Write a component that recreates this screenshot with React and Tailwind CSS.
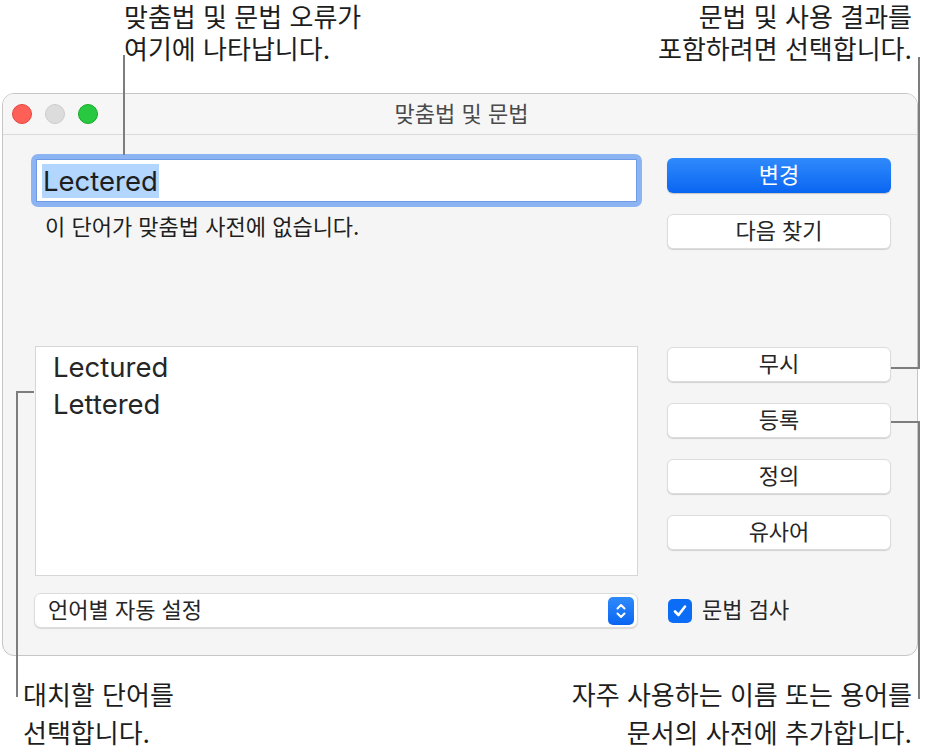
import React from "react";

const font = { fontFamily: '"Inter", "Noto Sans CJK KR", sans-serif' };

function Btn({ children, primary }) {
  if (primary) {
    return (
      <div className="h-[35px] w-[224px] rounded-[6px] bg-gradient-to-b from-[#2f8afb] to-[#0865f2] shadow-[0_1px_1px_rgba(0,0,0,0.2)] flex items-center justify-center text-white text-[22px]">
        {children}
      </div>
    );
  }
  return (
    <div className="h-[35px] w-[224px] rounded-[6px] bg-white border border-[#dcdcdc] shadow-[0_1px_1px_rgba(0,0,0,0.15)] flex items-center justify-center text-[#262626] text-[22px]">
      {children}
    </div>
  );
}

export default function App() {
  return (
    <div className="relative w-[931px] h-[753px] bg-white overflow-hidden text-[#1d1d1d]" style={font}>
      {/* top callouts */}
      <div className="flex justify-between h-[93px] pt-[2px]">
        <div className="ml-[124px] text-[26px] leading-[32px]">
          <div>맞춤법 및 문법 오류가</div>
          <div>여기에 나타납니다.</div>
        </div>
        <div className="mr-[19px] text-[26px] leading-[32px] text-right">
          <div>문법 및 사용 결과를</div>
          <div>포함하려면 선택합니다.</div>
        </div>
      </div>

      {/* window */}
      <div className="ml-[2px] w-[916px] h-[563px] rounded-[12px] border border-[#c6c6c6] bg-[#f5f5f5] overflow-hidden flex flex-col">
        <div className="h-[41px] shrink-0 border-b border-[#dadada] bg-[#f6f6f6] flex items-center">
          <div className="flex gap-[13px] pl-[9px]">
            <div className="w-[20px] h-[20px] rounded-full bg-[#fe5f57] border border-[#e2463f]" />
            <div className="w-[20px] h-[20px] rounded-full bg-[#dcdcdc] border border-[#cccccc]" />
            <div className="w-[20px] h-[20px] rounded-full bg-[#28c840] border border-[#1aab29]" />
          </div>
          <div className="flex-1 text-center text-[22px] text-[#4a4a4a] pr-[92px]">맞춤법 및 문법</div>
        </div>

        <div className="flex flex-1 pl-[28px] pr-[26px]">
          {/* left column */}
          <div className="w-[612px] flex flex-col">
            <div className="mt-[19px] h-[53px] rounded-[7px] bg-[#8db4f2] p-[5px]">
              <div className="h-full bg-white border border-[#6f9ae6] flex items-center pl-[5px]">
                <span className="bg-[#b3d6ff] text-[27.5px] leading-[34px] px-[1px] text-[#1e1e1e]">Lectered</span>
              </div>
            </div>
            <div className="mt-[6px] h-[28px] leading-[28px] pl-[14px] text-[22px] text-[#1f1f1f]">이 단어가 맞춤법 사전에 없습니다.</div>
            <div className="ml-[4px] mt-[105px] w-[603px] h-[230px] bg-white border border-[#d6d6d6] pt-[2px] pl-[17px] text-[27.5px] leading-[37px] text-[#262626]">
              <div>Lectured</div>
              <div>Lettered</div>
            </div>
            <div className="ml-[3px] mt-[17px] w-[604px] h-[35px] rounded-[7px] bg-white border border-[#dcdcdc] shadow-[0_1px_1px_rgba(0,0,0,0.12)] flex items-center justify-between pl-[13px] pr-[3px]">
              <span className="text-[22px] text-[#262626]">언어별 자동 설정</span>
              <div className="w-[26px] h-[28px] rounded-[5px] bg-gradient-to-b from-[#2f8afb] to-[#0865f2] flex items-center justify-center">
                <svg width="12" height="18" viewBox="0 0 12 18" fill="none" stroke="white" strokeWidth="2" strokeLinecap="round" strokeLinejoin="round">
                  <path d="M2.5 6.5 L6 3 L9.5 6.5" />
                  <path d="M2.5 11.5 L6 15 L9.5 11.5" />
                </svg>
              </div>
            </div>
          </div>

          {/* right column */}
          <div className="ml-[25px] flex flex-col">
            <div className="mt-[23px] flex flex-col gap-[21px]">
              <Btn primary>변경</Btn>
              <Btn>다음 찾기</Btn>
            </div>
            <div className="mt-[98px] flex flex-col gap-[21px]">
              <Btn>무시</Btn>
              <Btn>등록</Btn>
              <Btn>정의</Btn>
              <Btn>유사어</Btn>
            </div>
            <div className="mt-[44px] flex items-center gap-[10px] pl-[1px]">
              <div className="w-[24px] h-[24px] rounded-[5px] bg-[#0b6cf5] flex items-center justify-center">
                <svg width="16" height="16" viewBox="0 0 16 16" fill="none" stroke="white" strokeWidth="2.6" strokeLinecap="round" strokeLinejoin="round">
                  <path d="M3 8.5 L6.5 12 L13 3.5" />
                </svg>
              </div>
              <span className="text-[22px] text-[#262626]">문법 검사</span>
            </div>
          </div>
        </div>
      </div>

      {/* bottom callouts */}
      <div className="flex justify-between mt-[21px]">
        <div className="ml-[23px] text-[26px] leading-[38px]">
          <div>대치할 단어를</div>
          <div>선택합니다.</div>
        </div>
        <div className="mr-[19px] text-[26px] leading-[38px] text-right">
          <div>자주 사용하는 이름 또는 용어를</div>
          <div>문서의 사전에 추가합니다.</div>
        </div>
      </div>

      {/* callout lines */}
      <div className="absolute left-[123px] top-[55px] w-[2px] h-[100px] bg-[#7d7d7d]" />
      <div className="absolute left-[918px] top-[57px] w-[2px] h-[312px] bg-[#7d7d7d]" />
      <div className="absolute left-[891px] top-[367px] w-[29px] h-[2px] bg-[#7d7d7d]" />
      <div className="absolute left-[891px] top-[421px] w-[29px] h-[2px] bg-[#7d7d7d]" />
      <div className="absolute left-[918px] top-[421px] w-[2px] h-[278px] bg-[#7d7d7d]" />
      <div className="absolute left-[16px] top-[391px] w-[2px] h-[306px] bg-[#7d7d7d]" />
      <div className="absolute left-[16px] top-[391px] w-[18px] h-[2px] bg-[#7d7d7d]" />
    </div>
  );
}
